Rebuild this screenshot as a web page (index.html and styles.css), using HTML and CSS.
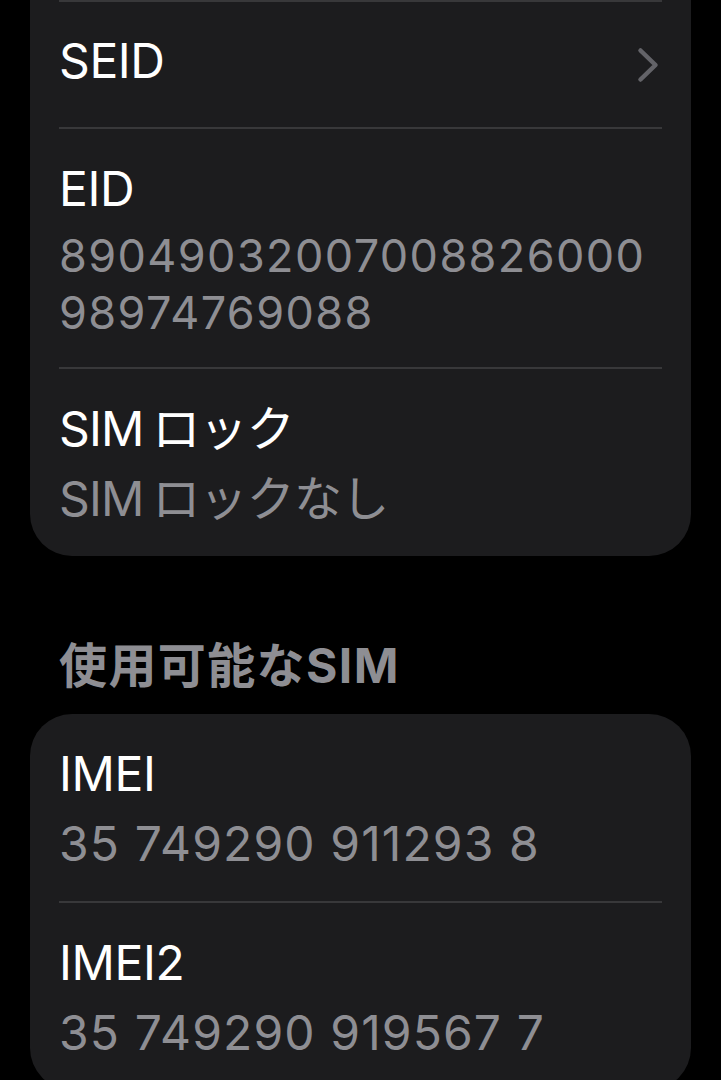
FILE: index.html
```html
<!DOCTYPE html>
<html lang="ja">
<head>
<meta charset="utf-8">
<title>情報</title>
<link rel="stylesheet" href="styles.css">
</head>
<body>
<main class="page">
  <section class="card card-continued">
    <div class="row row-nav">
      <span class="title">SEID</span>
      <svg class="chevron" viewBox="0 0 22 36" width="22" height="36" aria-hidden="true">
        <polyline points="3.5,3.5 18.5,18 3.5,32.5" fill="none" stroke="currentColor" stroke-width="4.5" stroke-linecap="round" stroke-linejoin="round"/>
      </svg>
    </div>
    <div class="row row-eid">
      <div class="title">EID</div>
      <div class="value value-eid">8904903200700882600098974769088</div>
    </div>
    <div class="row">
      <div class="title ja">SIM ロック</div>
      <div class="value ja">SIM ロックなし</div>
    </div>
  </section>

  <h2 class="section-header">使用可能なSIM</h2>

  <section class="card">
    <div class="row">
      <div class="title">IMEI</div>
      <div class="value value-num">35 749290 911293 8</div>
    </div>
    <div class="row">
      <div class="title">IMEI2</div>
      <div class="value value-num">35 749290 919567 7</div>
    </div>
  </section>
</main>
</body>
</html>
```

FILE: styles.css
```css
html, body {
  margin: 0;
  padding: 0;
  background: #000;
}

body {
  font-family: "Inter", "Noto Sans CJK JP", sans-serif;
  font-size: 48px;
  color: #fff;
  overflow: hidden;
  height: 1080px;
}

.page {
  display: flex;
  flex-direction: column;
}

.card {
  background: #1c1c1e;
  margin: 0 30px;
  padding: 0 29px;
  border-radius: 42px;
}

.card-continued {
  border-radius: 0 0 42px 42px;
}

.row {
  display: flex;
  flex-direction: column;
  padding: 31px 0 28px;
  border-top: 2px solid #38383a;
}

.card:not(.card-continued) .row:first-child {
  border-top: none;
}

.row-nav {
  flex-direction: row;
  align-items: center;
  justify-content: space-between;
  padding: 30px 0 37px;
}

.row-eid {
  padding-bottom: 26px;
}

.title {
  line-height: 58px;
  letter-spacing: -0.4px;
}

.value {
  line-height: 58px;
  margin-top: 12px;
  color: #8e8e93;
  letter-spacing: -0.4px;
}

.ja {
  word-spacing: -4px;
  letter-spacing: -0.8px;
}

.value-num {
  letter-spacing: 1.1px;
}

.value-eid {
  font-size: 45px;
  line-height: 57px;
  margin-top: 9px;
  word-break: break-all;
  letter-spacing: 1.4px;
}

.chevron {
  color: #636368;
  margin: 7px 3px 0 0;
  flex: none;
}

.section-header {
  margin: 81px 59px 19px;
  font-size: 48px;
  line-height: 58px;
  font-weight: 700;
  color: #8e8e93;
  letter-spacing: 1.4px;
}
```
